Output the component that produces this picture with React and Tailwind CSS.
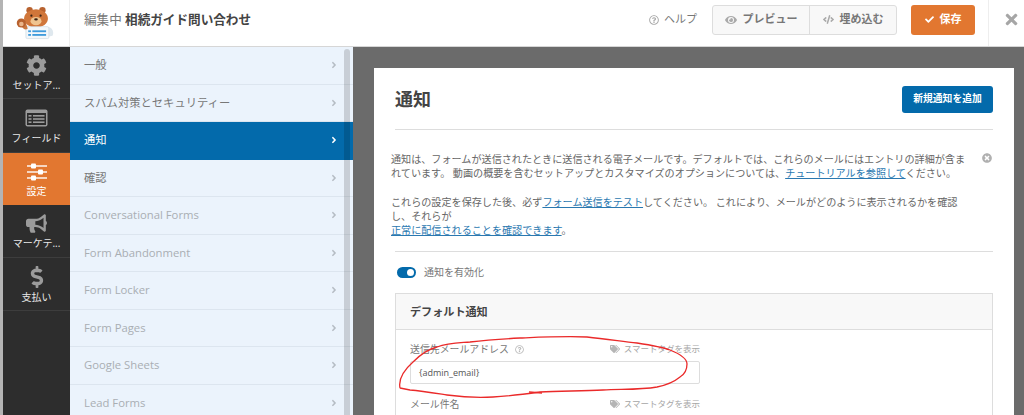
import { FaCog, FaBullhorn, FaDollarSign, FaAngleRight, FaRegQuestionCircle, FaEye, FaCode, FaCheck, FaTimes, FaTimesCircle, FaTags } from 'react-icons/fa'

function ListIcon({ className }) {
  return (
    <svg className={className} width="23" height="18" viewBox="0 0 23 18">
      <rect x="0.5" y="0.5" width="22" height="17" rx="2" fill="#9b9b9b" />
      <rect x="2" y="4" width="19" height="12" fill="#2d2d2d" />
      <rect x="3.5" y="6" width="3" height="1.6" fill="#9b9b9b" />
      <rect x="8" y="6" width="11.5" height="1.6" fill="#9b9b9b" />
      <rect x="3.5" y="9.2" width="3" height="1.6" fill="#9b9b9b" />
      <rect x="8" y="9.2" width="11.5" height="1.6" fill="#9b9b9b" />
      <rect x="3.5" y="12.4" width="3" height="1.6" fill="#9b9b9b" />
      <rect x="8" y="12.4" width="11.5" height="1.6" fill="#9b9b9b" />
    </svg>
  )
}

function SlidersIcon({ className }) {
  return (
    <svg className={className} width="20" height="18" viewBox="0 0 20 18" fill="white">
      <rect x="0" y="2.3" width="20" height="1.4" />
      <rect x="0" y="8.3" width="20" height="1.4" />
      <rect x="0" y="14.3" width="20" height="1.4" />
      <rect x="4" y="0.5" width="5" height="5" rx="1" />
      <rect x="11" y="6.5" width="5" height="5" rx="1" />
      <rect x="4" y="12.5" width="5" height="5" rx="1" />
    </svg>
  )
}

const iconGray = 'text-[#9b9b9b]'

const NAV = [
  { label: 'セットア...', h: 'h-[52px]', icon: <FaCog className={`text-[21px] ${iconGray}`} /> },
  { label: 'フィールド', h: 'h-[54px]', icon: <ListIcon className="my-[2px]" /> },
  { label: '設定', h: 'h-[52px]', active: true, icon: <SlidersIcon className="my-[1px]" /> },
  { label: 'マーケテ...', h: 'h-[53px]', icon: <FaBullhorn className={`text-[21px] ${iconGray}`} /> },
  { label: '支払い', h: 'h-[53px]', icon: <FaDollarSign className={`text-[22px] ${iconGray}`} /> },
]

const SECTIONS = [
  { label: '一般' },
  { label: 'スパム対策とセキュリティー' },
  { label: '通知', active: true },
  { label: '確認' },
  { label: 'Conversational Forms', off: true },
  { label: 'Form Abandonment', off: true },
  { label: 'Form Locker', off: true },
  { label: 'Form Pages', off: true },
  { label: 'Google Sheets', off: true },
  { label: 'Lead Forms', off: true },
]

function Bear() {
  return (
    <svg width="44" height="38" viewBox="0 0 48 40">
      <circle cx="17" cy="6" r="3.5" fill="#b8622f" />
      <circle cx="31" cy="6" r="3.5" fill="#b8622f" />
      <path d="M37 24c5 1 7 6 5 10l-5 1z" fill="#dfe8ee" />
      <ellipse cx="24" cy="15" rx="13" ry="10" fill="#d0763a" />
      <ellipse cx="24" cy="18" rx="6" ry="4.5" fill="#f0c48f" />
      <circle cx="19" cy="12" r="1.2" fill="#3b2416" />
      <circle cx="29" cy="12" r="1.2" fill="#3b2416" />
      <ellipse cx="24" cy="16" rx="2" ry="1.3" fill="#3b2416" />
      <rect x="13" y="24" width="25" height="13" rx="1.5" fill="#f3f7fa" stroke="#cfdbe3" strokeWidth="0.8" />
      <rect x="15.5" y="28" width="3" height="2" fill="#3f9bdc" />
      <rect x="20" y="28" width="15" height="2" fill="#3f9bdc" />
      <rect x="15.5" y="32" width="3" height="2" fill="#3f9bdc" />
      <rect x="20" y="32" width="15" height="2" fill="#3f9bdc" />
      <path d="M8 23c2 4 5 5 7 3l-2-6z" fill="#c9773f" />
      <circle cx="8" cy="20" r="5" fill="#b8622f" />
      <circle cx="8" cy="21" r="2.5" fill="#eab58a" />
    </svg>
  )
}

function SmartTag() {
  return (
    <span className="flex items-center gap-[4px] text-[8.5px] text-[#a6a6a6]">
      <FaTags className="text-[10px] text-[#b5b5b5]" />
      スマートタグを表示
    </span>
  )
}

export default function App() {
  return (
    <div className="relative flex w-[1024px] h-[415px] overflow-hidden bg-white font-['Open_Sans','Noto_Sans_CJK_JP',sans-serif]">
      <div className="w-[3px] shrink-0 bg-[#b4b4b4]" />
      <div className="flex flex-col flex-1 min-w-0">
        <header className="flex items-center h-[47px] shrink-0 bg-white border-b border-[#d6d6d6]">
          <div className="flex items-center justify-center w-[67px] h-full border-r border-[#eeeeee]">
            <Bear />
          </div>
          <div className="ml-[14px] mb-[5px] text-[12.6px] text-[#777777]">
            編集中 <span className="font-bold text-[#444444]">相続ガイド問い合わせ</span>
          </div>
          <div className="flex items-center ml-auto h-full">
            <span className="flex items-center gap-[5px] text-[11px] text-[#777777] mr-[15px] mb-[7px]">
              <FaRegQuestionCircle className="text-[10px] text-[#aaaaaa]" />
              ヘルプ
            </span>
            <div className="flex h-[30px] mb-[7px] rounded-[3px] border border-[#dddddd] bg-[#f8f8f8] text-[11px] font-bold text-[#777777] mr-[14px]">
              <span className="flex items-center gap-[6px] w-[97px] justify-center border-r border-[#dddddd]">
                <FaEye className="text-[12px] text-[#aaaaaa]" />
                プレビュー
              </span>
              <span className="flex items-center gap-[6px] w-[86px] justify-center">
                <FaCode className="text-[11px] text-[#aaaaaa]" />
                埋め込む
              </span>
            </div>
            <span className="flex items-center justify-center gap-[6px] w-[64px] h-[30px] mb-[7px] rounded-[3px] bg-[#e27730] text-[11px] font-bold text-white mr-[13px]">
              <FaCheck className="text-[9px]" />
              保存
            </span>
            <div className="flex items-center justify-end w-[36px] h-full pr-[4px] pb-[7px] border-l border-[#eeeeee]">
              <FaTimes className="text-[17px] text-[#a6a6a6]" />
            </div>
          </div>
        </header>

        <div className="flex flex-1 min-h-0">
          <nav className="w-[67px] shrink-0 bg-[#2d2d2d]">
            {NAV.map(item => (
              <div
                key={item.label}
                className={`flex flex-col items-center justify-center gap-[3px] ${item.h} ${item.active ? 'bg-[#e27730] text-white' : 'border-b border-[#3d3d3d] text-[#e8e8e8]'}`}
              >
                {item.icon}
                <span className="text-[10px] leading-[12px] whitespace-nowrap">{item.label}</span>
              </div>
            ))}
          </nav>

          <aside className="relative w-[283px] shrink-0 bg-[#ebf3fc] overflow-hidden">
            {SECTIONS.map(item => (
              <div
                key={item.label}
                className={`flex items-center justify-between h-[37.5px] pl-[14px] pr-[14px] border-b ${item.active ? 'bg-[#036aab] border-[#036aab] text-white' : 'border-[#dce5ef]'} ${item.off ? 'text-[#a9aeb3]' : ''} ${!item.active && !item.off ? 'text-[#777777]' : ''}`}
              >
                <span className="pt-[1px] text-[11.3px]">{item.label}</span>
                <FaAngleRight className={`text-[10px] ${item.active ? 'text-white' : 'text-[#b5bcc4]'}`} />
              </div>
            ))}
            {/* scrollbar */}
            <div className="absolute top-[2px] bottom-0 right-[3px] w-[6px] bg-black/15 rounded-t-[3px]" />
          </aside>

          <main className="flex-1 min-w-0 bg-[#6b6b6b] pt-[21px] pl-[21px] pr-[10px]">
            <div className="h-full bg-white px-[21px]">
              <div className="flex items-center justify-between h-[62px] border-b border-[#dddddd] pt-[2px]">
                <h1 className="text-[18px] font-bold text-[#444444]">通知</h1>
                <button className="w-[91px] h-[27px] rounded-[3px] bg-[#036aab] text-[9.8px] font-bold text-white">新規通知を追加</button>
              </div>

              <div className="relative border-b border-[#dddddd] pt-[22px] pb-[14px] text-[10.1px] leading-[14.3px] text-[#666666]">
                <FaTimesCircle className="absolute right-[1px] top-[23px] text-[10px] text-[#b0b0b0]" />
                <div className="-ml-[4px]">
                  <p>
                    通知は、フォームが送信されたときに送信される電子メールです。デフォルトでは、これらのメールにはエントリの詳細が含ま<br />
                    れています。 動画の概要を含むセットアップとカスタマイズのオプションについては、<a className="text-[#2a78b0] underline">チュートリアルを参照して</a>ください。
                  </p>
                  <p className="mt-[14px]">
                    これらの設定を保存した後、必ず<a className="text-[#2a78b0] underline">フォーム送信をテスト</a>してください。 これにより、メールがどのように表示されるかを確認<br />
                    し、それらが<br />
                    <a className="text-[#2a78b0] underline">正常に配信されることを確認できます</a>。
                  </p>
                </div>
              </div>

              <div className="flex items-center gap-[8px] mt-[13px] ml-[2px] text-[10px] text-[#777777]">
                <span className="relative w-[19px] h-[11px] rounded-full bg-[#036aab]">
                  <span className="absolute right-[2px] top-[2px] w-[7px] h-[7px] rounded-full bg-white" />
                </span>
                通知を有効化
              </div>

              <section className="mt-[13px] border border-[#dddddd] h-[130px]">
                <div className="flex items-center h-[36px] px-[14px] bg-[#f8f8f8] border-b border-[#dddddd] text-[11.1px] font-bold text-[#444444]">
                  デフォルト通知
                </div>
                <div className="w-[290px] ml-[14px] mt-[12px]">
                  <div className="flex items-center justify-between h-[14px]">
                    <span className="flex items-center gap-[6px] text-[9.9px] text-[#777777]">
                      送信先メールアドレス
                      <FaRegQuestionCircle className="text-[9px] text-[#bbbbbb]" />
                    </span>
                    <SmartTag />
                  </div>
                  <div className="flex items-center h-[23px] mt-[5px] px-[8px] rounded-[2px] border border-[#dddddd] text-[9px] text-[#555555]">
                    {'{admin_email}'}
                  </div>
                  <div className="flex items-center justify-between h-[14px] mt-[13px]">
                    <span className="text-[9.9px] text-[#777777]">メール件名</span>
                    <SmartTag />
                  </div>
                </div>
              </section>
            </div>
          </main>
        </div>
      </div>

      {/* hand drawn annotation */}
      <svg className="absolute inset-0 pointer-events-none" width="1024" height="415" viewBox="0 0 1024 415" fill="none">
        <path
          d="M400 388C398 378 404 370 413 362C420 355 428 349 437 347C448 343 458 343 470 342C488 340 503 339 520 338C545 337 566 336 587 337C605 339 620 341 637 343C650 345 662 347 670 350C680 354 687 358 687 364C687 370 685 374 680 377C674 382 667 385 657 387C640 390 622 389 603 390C582 391 560 391 540 392C525 394 510 396 493 397C478 398 462 397 447 395C434 393 422 391 410 390L400 388"
          stroke="#ea2a2a"
          strokeWidth="1.3"
        />
        <path d="M529 392L542 393" stroke="#ea2a2a" strokeWidth="1.3" />
      </svg>
    </div>
  )
}
